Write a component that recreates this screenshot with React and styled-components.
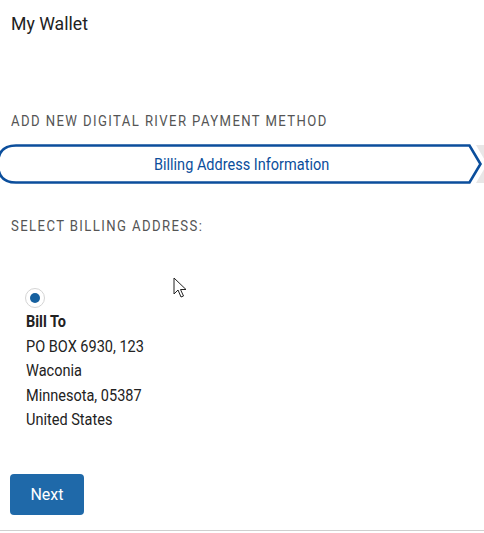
import styled, { createGlobalStyle } from 'styled-components';

const Global = createGlobalStyle`
  body {
    margin: 0;
    background: #fff;
    font-family: Roboto, "Liberation Sans", sans-serif;
    color: #222;
  }
`;

const Page = styled.div`
  width: 484px;
  height: 533px;
  position: relative;
  overflow: hidden;
  display: flex;
  flex-direction: column;
`;

const Title = styled.h1`
  margin: 12px 0 0 11px;
  font-size: 19px;
  font-weight: 400;
  line-height: 24px;
  color: #222;
  transform: scaleX(0.93);
  transform-origin: left;
`;

const SectionLabel = styled.div`
  margin: ${p => p.$top}px 0 0 11px;
  font-size: 15px;
  line-height: 18px;
  letter-spacing: 1.6px;
  color: #555;
  text-transform: uppercase;
  transform: scaleX(0.875);
  transform-origin: left;
`;

const Steps = styled.div`
  position: relative;
  height: 42px;
  margin-top: 13px;
  display: flex;
  align-items: center;
  justify-content: center;
`;

const StepShape = styled.svg`
  position: absolute;
  left: 0;
  top: 0;
`;

const StepText = styled.span`
  position: relative;
  font-size: 16.5px;
  font-weight: 400;
  color: #0b4e9c;
  transform: scaleX(0.88);
`;

const Address = styled.div`
  padding-left: 26px;
  margin-top: 53px;
  display: flex;
  flex-direction: column;
`;

const Radio = styled.span`
  width: 18px;
  height: 18px;
  margin-left: -1px;
  border-radius: 50%;
  border: 1px solid #d4d4d4;
  display: flex;
  align-items: center;
  justify-content: center;
  margin-bottom: 2px;
  &::after {
    content: '';
    width: 10px;
    height: 10px;
    border-radius: 50%;
    background: #16609f;
  }
`;

const Line = styled.div`
  font-size: 16.5px;
  line-height: 24.5px;
  font-weight: ${p => (p.$bold ? 700 : 400)};
  color: #222;
  transform: scaleX(0.88);
  transform-origin: left;
`;

const Button = styled.button`
  margin: 41px 0 0 10px;
  width: 74px;
  height: 41px;
  border: none;
  border-radius: 4px;
  background: #1f69a9;
  color: #fff;
  font-family: Roboto, "Liberation Sans", sans-serif;
  font-size: 16px;
  font-weight: 400;
`;

const Divider = styled.div`
  position: absolute;
  left: 0;
  right: 0;
  top: 530px;
  height: 1px;
  background: #cfcfcf;
`;

const Cursor = styled.svg`
  position: absolute;
  left: 173px;
  top: 277px;
`;

export default function App() {
  return (
    <Page>
      <Global />
      <Title>My Wallet</Title>
      <SectionLabel $top={76}>Add New Digital River Payment Method</SectionLabel>
      <Steps>
        <StepShape width="484" height="42" viewBox="0 0 484 42">
          <path d="M476 2 L484 2 L484 40 L476 40 L487 21 Z" fill="#e8e6e6" />
          <path
            d="M16 2.5 L469.5 2.5 L480.5 21 L469.5 39.5 L16 39.5 Q-2 39.5 -2 21 Q-2 2.5 16 2.5 Z"
            fill="#fff"
            stroke="#0b4e9c"
            strokeWidth="2.6"
          />
        </StepShape>
        <StepText>Billing Address Information</StepText>
      </Steps>
      <SectionLabel $top={32}>Select Billing Address:</SectionLabel>
      <Address>
        <Radio />
        <Line $bold>Bill To</Line>
        <Line>PO BOX 6930, 123</Line>
        <Line>Waconia</Line>
        <Line>Minnesota, 05387</Line>
        <Line>United States</Line>
      </Address>
      <Button>Next</Button>
      <Divider />
      <Cursor width="14" height="22" viewBox="0 0 14 22">
        <path d="M1 1 L1 17 L5 13 L8 20 L10.5 19 L7.5 12.5 L13 12.5 Z" fill="#fff" stroke="#222" strokeWidth="1" strokeLinejoin="round" />
      </Cursor>
    </Page>
  );
}
